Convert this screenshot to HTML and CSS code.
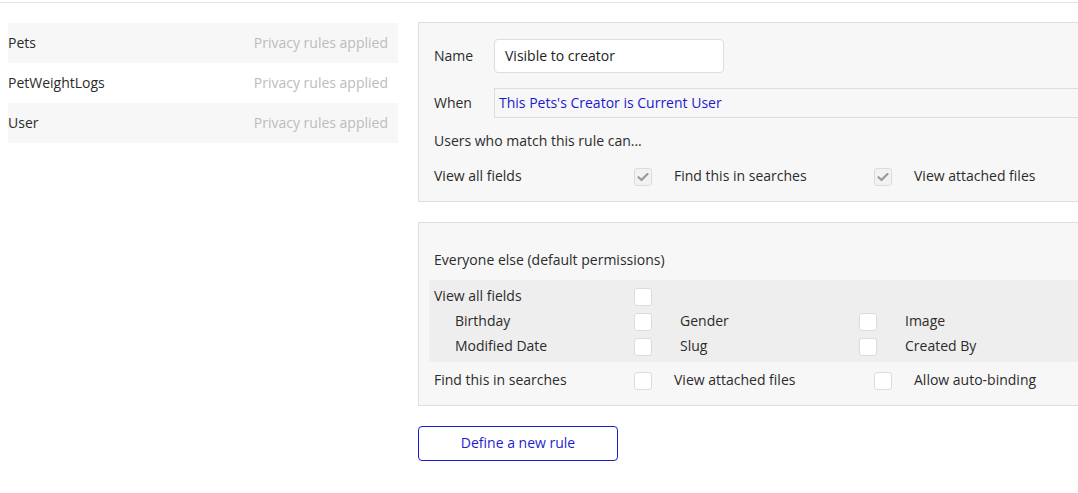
FILE: index.html
```html
<!DOCTYPE html>
<html>
<head>
<meta charset="utf-8">
<link rel="stylesheet" href="styles.css">
</head>
<body>
<div class="topline"></div>
<div class="main">
  <div class="types">
    <div class="type shaded"><span class="type-name">Pets</span><span class="type-status">Privacy rules applied</span></div>
    <div class="type"><span class="type-name">PetWeightLogs</span><span class="type-status">Privacy rules applied</span></div>
    <div class="type shaded"><span class="type-name">User</span><span class="type-status">Privacy rules applied</span></div>
  </div>
  <div class="rules">
    <div class="box rule-box">
      <div class="field-row name-row">
        <span class="field-label">Name</span>
        <div class="name-input">Visible to creator</div>
      </div>
      <div class="field-row when-row">
        <span class="field-label">When</span>
        <div class="when-input">This Pets's Creator is Current User</div>
      </div>
      <div class="caption">Users who match this rule can...</div>
      <div class="perm-row">
        <div class="perm"><span class="perm-label">View all fields</span><span class="cb checked"><svg width="12" height="10" viewBox="0 0 12 10"><path d="M1.5 5.2 L4.5 8 L10.5 2" fill="none" stroke="#9a9a9a" stroke-width="2.2" stroke-linecap="round" stroke-linejoin="round"/></svg></span></div>
        <div class="perm"><span class="perm-label">Find this in searches</span><span class="cb checked"><svg width="12" height="10" viewBox="0 0 12 10"><path d="M1.5 5.2 L4.5 8 L10.5 2" fill="none" stroke="#9a9a9a" stroke-width="2.2" stroke-linecap="round" stroke-linejoin="round"/></svg></span></div>
        <div class="perm"><span class="perm-label">View attached files</span></div>
      </div>
    </div>
    <div class="box default-box">
      <div class="caption first">Everyone else (default permissions)</div>
      <div class="band">
        <div class="band-row">
          <div class="perm"><span class="perm-label">View all fields</span><span class="cb"></span></div>
        </div>
        <div class="band-row fields">
          <div class="fperm"><span class="fperm-label">Birthday</span><span class="cb"></span></div>
          <div class="fperm"><span class="fperm-label">Gender</span><span class="cb"></span></div>
          <div class="fperm"><span class="fperm-label">Image</span></div>
        </div>
        <div class="band-row fields">
          <div class="fperm"><span class="fperm-label">Modified Date</span><span class="cb"></span></div>
          <div class="fperm"><span class="fperm-label">Slug</span><span class="cb"></span></div>
          <div class="fperm"><span class="fperm-label">Created By</span></div>
        </div>
      </div>
      <div class="perm-row bottom">
        <div class="perm"><span class="perm-label">Find this in searches</span><span class="cb"></span></div>
        <div class="perm"><span class="perm-label">View attached files</span><span class="cb"></span></div>
        <div class="perm"><span class="perm-label">Allow auto-binding</span></div>
      </div>
    </div>
    <button class="new-rule">Define a new rule</button>
  </div>
</div>
</body>
</html>
```

FILE: styles.css
```css
html, body {
  margin: 0;
  padding: 0;
  overflow: hidden;
  background: #ffffff;
}
body {
  font-family: "Open Sans", "Liberation Sans", sans-serif;
  font-size: 14px;
  color: #2b2b2b;
  width: 1078px;
  height: 493px;
}
.topline {
  height: 2px;
  border-bottom: 1px solid #e4e4e4;
}
.main {
  display: flex;
  padding-top: 19px;
  align-items: flex-start;
}
.types {
  margin-left: 8px;
  width: 390px;
  flex: none;
  margin-top: 1px;
}
.type {
  box-sizing: border-box;
  height: 40px;
  display: flex;
  align-items: center;
  justify-content: space-between;
  padding-right: 10px;
  padding-bottom: 2px;
}
.type.shaded {
  background: #f7f7f7;
}
.type-status {
  color: #bcbcbc;
}
.rules {
  margin-left: 20px;
  width: 700px;
  flex: none;
}
.box {
  background: #f7f7f7;
  border: 1px solid #dedede;
  border-right: none;
  padding-left: 15px;
}
.rule-box {
  padding-top: 16px;
  padding-bottom: 15px;
}
.field-row {
  display: flex;
  align-items: center;
}
.field-label {
  width: 60px;
  flex: none;
  padding-bottom: 2px;
}
.name-row {
  height: 34px;
}
.name-input {
  box-sizing: border-box;
  width: 230px;
  height: 34px;
  background: #ffffff;
  border: 1px solid #dddddd;
  border-radius: 4px;
  display: flex;
  align-items: center;
  padding-left: 10px;
  padding-bottom: 1px;
  color: #222222;
}
.when-row {
  margin-top: 15px;
  height: 30px;
}
.when-input {
  box-sizing: border-box;
  flex: 1;
  height: 30px;
  border: 1px solid #dddddd;
  border-right: none;
  background: #f7f7f7;
  display: flex;
  align-items: center;
  padding-left: 4px;
  padding-bottom: 1px;
  color: #1a1ad0;
}
.caption {
  height: 20px;
  line-height: 20px;
  margin-top: 13px;
}
.caption.first {
  margin-top: 0;
}
.perm-row {
  display: flex;
  margin-top: 15px;
  height: 20px;
}
.perm {
  width: 240px;
  display: flex;
  align-items: center;
  flex: none;
  height: 100%;
}
.perm-label {
  width: 200px;
  flex: none;
  padding-bottom: 1px;
}
.cb {
  box-sizing: border-box;
  width: 18px;
  height: 18px;
  border: 1px solid #dcdcdc;
  border-radius: 3px;
  background: #ffffff;
  flex: none;
  display: flex;
  align-items: center;
  justify-content: center;
  margin-top: 2px;
}
.cb.checked {
  background: #f2f2f2;
}
.default-box {
  margin-top: 20px;
  padding-top: 27px;
  padding-bottom: 15px;
}
.band {
  margin-top: 10px;
  margin-left: -5px;
  padding: 3px 0 4px 5px;
  background: #eeeeee;
}
.band-row {
  display: flex;
  height: 25px;
}
.band-row.fields {
  padding-left: 21px;
}
.fperm {
  width: 225px;
  display: flex;
  align-items: center;
  flex: none;
}
.fperm-label {
  width: 179px;
  flex: none;
  padding-bottom: 1px;
}
.perm-row.bottom {
  margin-top: 8px;
}
.new-rule {
  margin-top: 20px;
  width: 200px;
  height: 35px;
  background: #ffffff;
  border: 1px solid #1d1dd0;
  border-radius: 4px;
  color: #1d1dd0;
  font-family: "Open Sans", "Liberation Sans", sans-serif;
  font-size: 14px;
  padding: 0 0 2px;
  cursor: pointer;
}
```
